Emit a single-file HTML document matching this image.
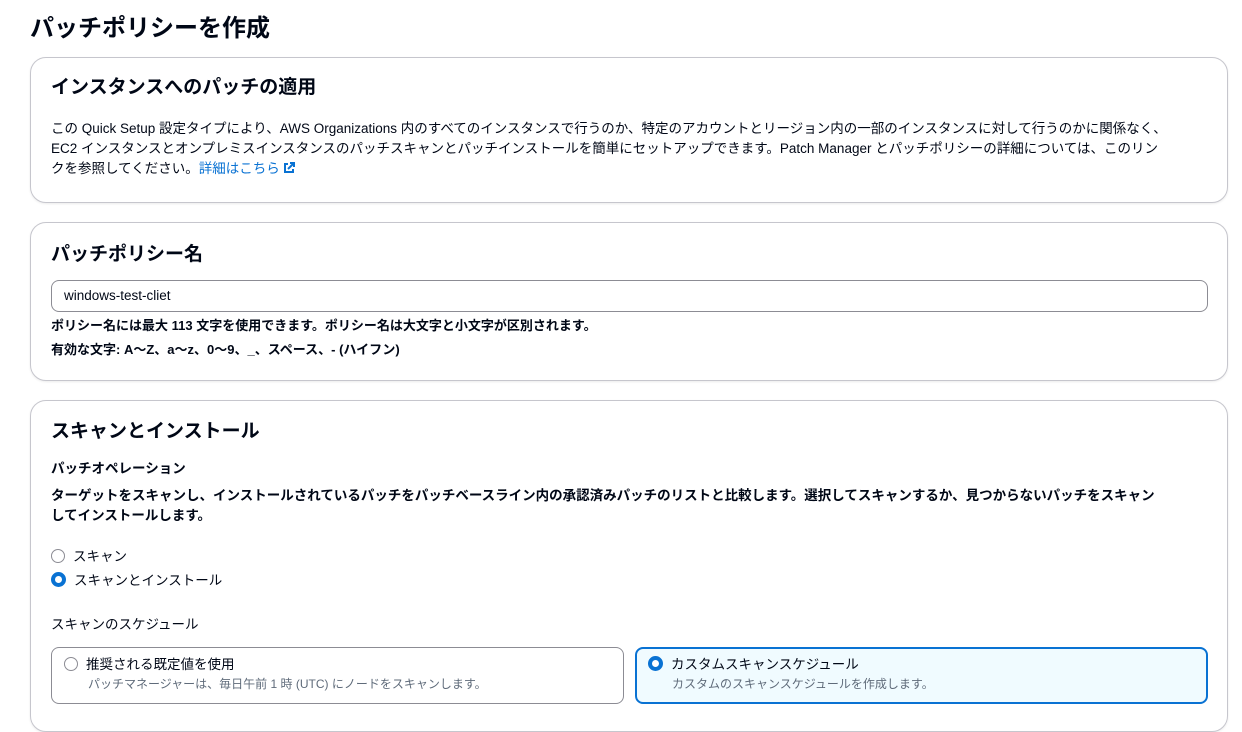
<!DOCTYPE html>
<html><head><meta charset="utf-8"><style>
body{margin:0;width:1242px;height:709px;overflow:hidden;background:#fff;font-family:"Liberation Sans","Noto Sans CJK JP",sans-serif;color:#000716;}
.h1{position:absolute;left:30px;top:8px;font-size:24px;font-weight:bold;}
.card{position:absolute;left:30px;width:1196px;border:1px solid #c6c6cd;border-radius:16px;background:#fff;box-shadow:0 1px 2px rgba(0,0,0,.08);}
.h2{position:absolute;left:20px;font-size:19px;font-weight:bold;}
.t{position:absolute;left:20px;font-size:13.5px;line-height:20px;white-space:nowrap;}
.b{font-weight:bold}
.radio{display:inline-block;width:12px;height:12px;border:1.5px solid #8c8c94;border-radius:50%;vertical-align:-2px;margin-right:8px;box-sizing:content-box}
.radio.on{border:4px solid #0972d3;width:7px;height:7px;background:#fff}
.tile{position:absolute;top:246px;height:57px;border:1px solid #8c8c94;border-radius:8px;box-sizing:border-box;}
</style></head><body>
<div class="h1">パッチポリシーを作成</div>
<div class="card" style="top:57px;height:144px">
<div class="h2" style="top:14px">インスタンスへのパッチの適用</div>
<div class="t" style="top:61px">この Quick Setup 設定タイプにより、AWS Organizations 内のすべてのインスタンスで行うのか、特定のアカウントとリージョン内の一部のインスタンスに対して行うのかに関係なく、<br>EC2 インスタンスとオンプレミスインスタンスのパッチスキャンとパッチインストールを簡単にセットアップできます。Patch Manager とパッチポリシーの詳細については、このリン<br>クを参照してください。<span style="color:#0972d3">詳細はこちら <svg width="12" height="12" viewBox="0 0 12 12" style="vertical-align:-1px"><path d="M5 2H2v8h8V7M7 1h4v4M11 1L5 7" stroke="#0972d3" stroke-width="2" fill="none"/></svg></span></div>
</div>
<div class="card" style="top:222px;height:157px">
<div class="h2" style="top:16px">パッチポリシー名</div>
<div style="position:absolute;left:20px;top:57px;width:1157px;height:32px;border:1px solid #8c8c94;border-radius:8px;box-sizing:border-box;font-size:13.5px;line-height:30px;padding-left:12px">windows-test-cliet</div>
<div class="t b" style="top:93px;font-size:13px">ポリシー名には最大 113 文字を使用できます。ポリシー名は大文字と小文字が区別されます。</div>
<div class="t b" style="top:117px;font-size:13px">有効な文字: A〜Z、a〜z、0〜9、_、スペース、- (ハイフン)</div>
</div>
<div class="card" style="top:400px;height:330px">
<div class="h2" style="top:15px">スキャンとインストール</div>
<div class="t b" style="top:58px">パッチオペレーション</div>
<div class="t b" style="top:85px">ターゲットをスキャンし、インストールされているパッチをパッチベースライン内の承認済みパッチのリストと比較します。選択してスキャンするか、見つからないパッチをスキャン<br>してインストールします。</div>
<div class="t" style="top:146px"><span class="radio"></span>スキャン</div>
<div class="t" style="top:170px"><span class="radio on"></span>スキャンとインストール</div>
<div class="t" style="top:214px">スキャンのスケジュール</div>
<div class="tile" style="left:20px;width:573px">
<div class="t" style="left:12px;top:7px"><span class="radio"></span>推奨される既定値を使用</div>
<div class="t" style="left:36px;top:26px;font-size:12px;color:#5f6b7a">パッチマネージャーは、毎日午前 1 時 (UTC) にノードをスキャンします。</div></div>
<div class="tile" style="left:604px;width:573px;border:2px solid #0972d3;background:#f0fbff">
<div class="t" style="left:11px;top:6px"><span class="radio on"></span>カスタムスキャンスケジュール</div>
<div class="t" style="left:35px;top:25px;font-size:12px;color:#5f6b7a">カスタムのスキャンスケジュールを作成します。</div></div>
</div>
</body></html>
